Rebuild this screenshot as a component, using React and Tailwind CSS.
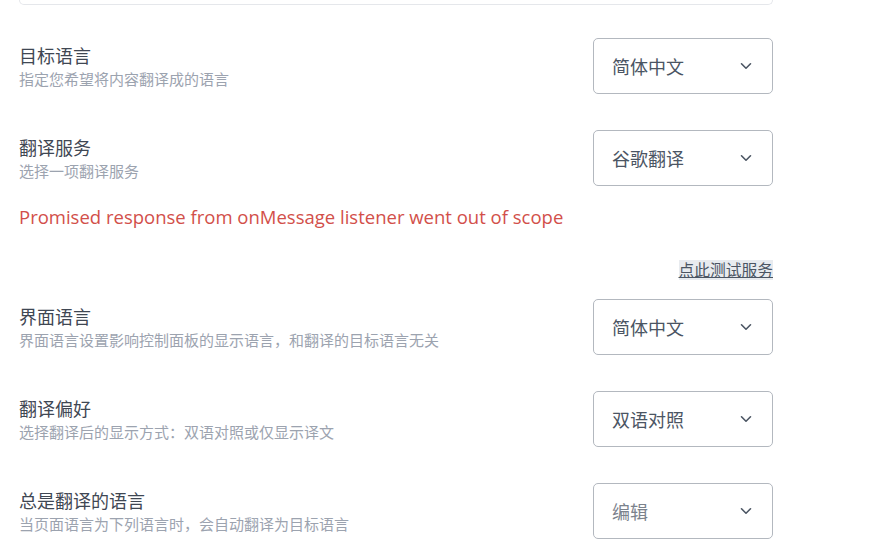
import React from "react";

const font = { fontFamily: '"Noto Sans CJK SC", "Noto Sans", sans-serif' };

const Chevron = () => (
  <svg width="12" height="8" viewBox="0 0 12 8" fill="none" className="text-[#4b5563]">
    <path d="M1.5 1.8 L6 6.2 L10.5 1.8" stroke="currentColor" strokeWidth="1.6" strokeLinecap="round" strokeLinejoin="round" />
  </svg>
);

const SettingRow = ({ title, desc, value, muted, className = "" }) => (
  <div className={`flex items-center justify-between h-[56px] ${className}`}>
    <div className="flex flex-col">
      <div className="text-[18px] leading-[24px] text-[#3f4753]">{title}</div>
      <div className="text-[15px] leading-[22px] text-[#9ca3af] mt-[1px]">{desc}</div>
    </div>
    <div className="w-[180px] h-[56px] border border-[#b3b8bf] rounded-[5px] flex items-center justify-between pl-[18px] pr-[20px] bg-white">
      <span className={`text-[18px] ${muted ? "text-[#7b828c]" : "text-[#4b5563]"}`}>{value}</span>
      <Chevron />
    </div>
  </div>
);

const App = () => {
  return (
    <div className="min-h-screen bg-white" style={font}>
      <div className="pl-[19px] w-[773px]">
        <div className="h-[5px] border-x border-b border-[#e5e7eb] rounded-b-[6px]" />

        <SettingRow className="mt-[33px]" title="目标语言" desc="指定您希望将内容翻译成的语言" value="简体中文" />
        <SettingRow className="mt-[36px]" title="翻译服务" desc="选择一项翻译服务" value="谷歌翻译" />

        <div
          className="mt-[19px] text-[18.5px] leading-[24px] text-[#d24f4a]"
          style={{ fontFamily: '"Open Sans", "Noto Sans", sans-serif' }}
        >
          Promised response from onMessage listener went out of scope
        </div>

        <div className="flex justify-end mt-[31px]">
          <a href="#" className="text-[15.75px] leading-[20px] text-[#4b5563] underline bg-[#e8ebef]">
            点此测试服务
          </a>
        </div>

        <SettingRow className="mt-[19px]" title="界面语言" desc="界面语言设置影响控制面板的显示语言，和翻译的目标语言无关" value="简体中文" />
        <SettingRow className="mt-[36px]" title="翻译偏好" desc="选择翻译后的显示方式：双语对照或仅显示译文" value="双语对照" />
        <SettingRow className="mt-[36px]" title="总是翻译的语言" desc="当页面语言为下列语言时，会自动翻译为目标语言" value="编辑" muted />
      </div>
    </div>
  );
};

export default App;
